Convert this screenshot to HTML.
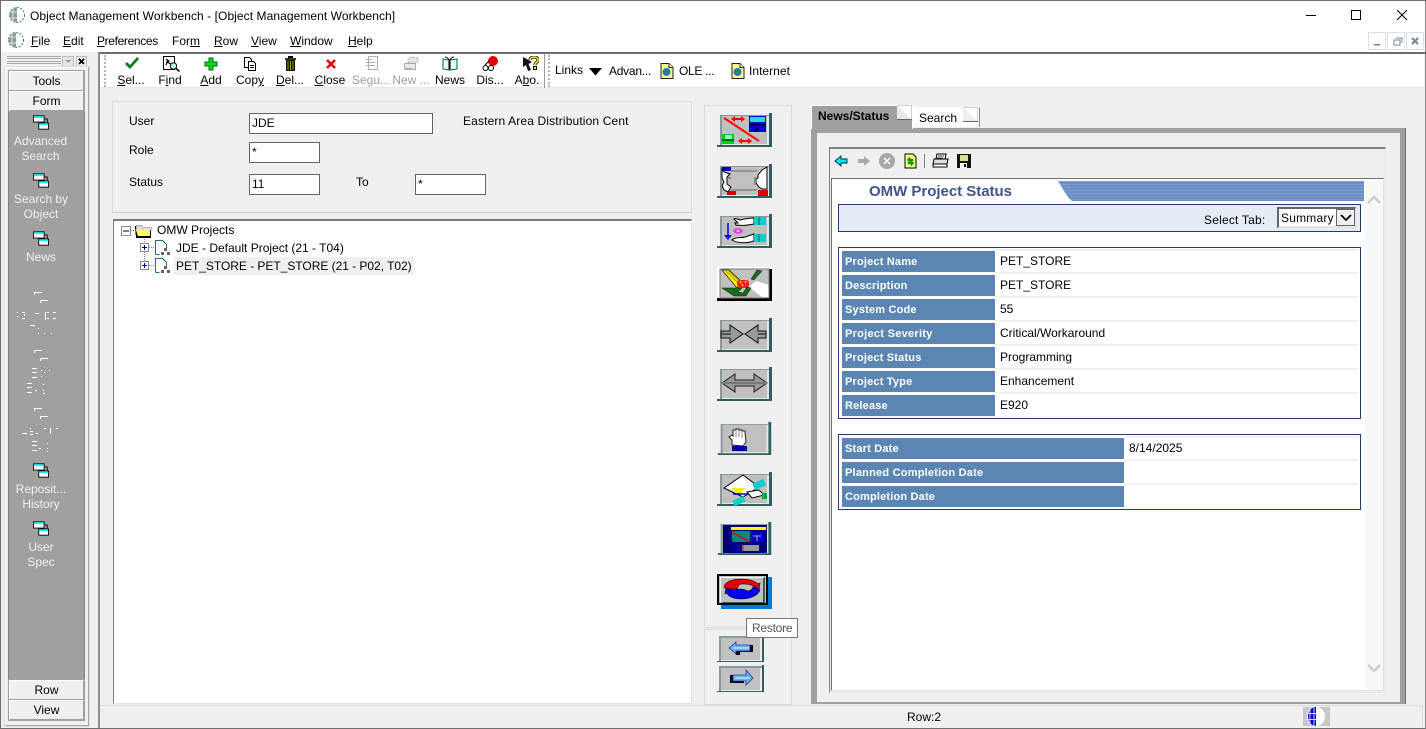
<!DOCTYPE html>
<html><head><meta charset="utf-8"><style>
html,body{margin:0;padding:0}
body{width:1426px;height:729px;position:relative;overflow:hidden;background:#f0f0f0;font:12px/14px "Liberation Sans",sans-serif;color:#000}
.a,.t,.c,svg.i{position:absolute}
.a{box-sizing:border-box}
.t{white-space:nowrap;line-height:14px}
.c{white-space:nowrap;line-height:14px;text-align:center;transform:translateX(-50%)}
.w{color:#f0f0f0}
.g{color:#a0a0a0}
.in{position:absolute;box-sizing:border-box;background:#fff;border:1px solid #646464;padding-left:2px;line-height:18px;height:21px}
.btn{position:absolute;left:9px;width:75px;height:20px;box-sizing:border-box;background:#f0f0f0;border:1px solid #a0a0a0;border-top-color:#fff;border-left-color:#fff;outline:1px solid #a0a0a0;text-align:center;line-height:19px}
.lb{position:absolute;background:#5b86b4;color:#fff;font-weight:bold;font-size:11px;line-height:22px;letter-spacing:.18px;padding-left:3px;box-sizing:border-box;height:21px}
.v{position:absolute;white-space:nowrap;line-height:14px}
.rl{position:absolute;height:2px;background:#f1f0ec}
</style></head><body>
<svg width="0" height="0" style="position:absolute"><defs>
<symbol id="f" viewBox="0 0 55 35"><path fill="#2f5f5f" d="M0 32h52V0l3-1v35H0z"/><rect x="3" y="2" width="49" height="30" fill="#c0c0c0"/><path fill="#8a9a9a" d="M3 2h49v1H5v29H3z"/><path fill="#e6e6e6" d="M50 3h2v29H5v-1h45z"/></symbol>
<symbol id="m" viewBox="0 0 18 16"><rect x=".5" y=".5" width="12" height="7" fill="#fff" stroke="#000"/><rect x="1" y="1" width="11" height="2" fill="#0ff"/><path d="M13 4h3v4" fill="none" stroke="#000"/><rect x="6.5" y="8.5" width="11" height="7" fill="#fff" stroke="#000"/><rect x="7" y="9" width="10" height="2" fill="#0ff"/></symbol>
<symbol id="gl" viewBox="0 0 18 18"><circle cx="9" cy="9" r="7.5" fill="#fff" stroke="#2f7f7f" stroke-dasharray="2 1.5"/><path d="M9 1.5A7.5 7.5 0 0 0 9 16.500z" fill="#8d9a9a"/><path d="M2 6h7M2 12h7M5 2v14" stroke="#dfe5e5"/></symbol>
<symbol id="doc" viewBox="0 0 14 16"><path d="M1 .5h8l4 4v11H1z" fill="#ff8" stroke="#222"/><path d="M9 .5v4h4" fill="#fff" stroke="#222"/><circle cx="6.500" cy="9" r="4" fill="#27c"/><path d="M4 8l3-2 1 3-3 2z" fill="#383"/></symbol>
</defs></svg>

<!-- window -->
<div class="a" style="left:0;top:0;width:1426px;height:729px;border:1px solid #6f6f6f;border-right-color:#8a8a8a"></div>
<div class="a" style="left:1px;top:1px;width:1424px;height:51px;background:#fff"></div>
<svg class="i" style="left:8px;top:6px" width="18" height="18"><use href="#gl"/></svg>
<div class="t" style="left:30px;top:9px;letter-spacing:.07px">Object Management Workbench - [Object Management Workbench]</div>
<svg class="i" style="left:7px;top:31px" width="18" height="18"><use href="#gl"/></svg>
<div class="t" style="left:31px;top:34px"><u>F</u>ile</div>
<div class="t" style="left:63px;top:34px"><u>E</u>dit</div>
<div class="t" style="left:97px;top:34px;letter-spacing:-.35px"><u>P</u>references</div>
<div class="t" style="left:172px;top:34px">For<u>m</u></div>
<div class="t" style="left:214px;top:34px"><u>R</u>ow</div>
<div class="t" style="left:251px;top:34px"><u>V</u>iew</div>
<div class="t" style="left:290px;top:34px"><u>W</u>indow</div>
<div class="t" style="left:348px;top:34px"><u>H</u>elp</div>
<!-- window controls -->
<svg class="i" style="left:1300px;top:5px" width="120" height="22" fill="none" stroke="#000" shape-rendering="crispEdges"><path d="M6 10.500h10"/><rect x="51.500" y="5.500" width="9" height="9"/><path d="M97 5l10 10M107 5l-10 10" shape-rendering="auto"/></svg>
<div class="a" style="left:1368px;top:32px;width:18px;height:18px;border:1px solid #e0e0e0"></div>
<div class="a" style="left:1387px;top:32px;width:18px;height:18px;border:1px solid #e0e0e0"></div>
<div class="a" style="left:1406px;top:32px;width:18px;height:18px;border:1px solid #e0e0e0"></div>
<svg class="i" style="left:1368px;top:32px" width="56" height="18" fill="none" stroke="#6f8899" stroke-width="1.500" shape-rendering="crispEdges"><path d="M6 12.500h6"/><path d="M26 8h6v5h-6zM28 6h6v5" stroke-width="1"/><path d="M44 6l6 6M50 6l-6 6" stroke-width="2" shape-rendering="auto"/></svg>

<!-- toolbar -->
<div class="a" style="left:98px;top:52px;width:1328px;height:2px;background:#6d6d6d"></div>
<div class="a" style="left:98px;top:54px;width:1326px;height:34px;background:#fff"></div>
<div class="a" style="left:98px;top:52px;width:2px;height:676px;background:#8c8c8c"></div>
<div class="a" style="left:100px;top:87px;width:1324px;height:1px;background:#e8e8e8"></div>
<div class="a" style="left:104px;top:55px;height:32px;width:0;border-left:2px dotted #b5b5b5"></div>
<div class="a" style="left:544px;top:54px;height:34px;width:1px;background:#9a9a9a"></div>
<div class="a" style="left:548px;top:55px;height:32px;width:0;border-left:2px dotted #b5b5b5"></div>

<svg class="i" style="left:124px;top:57px" width="15" height="13"><path d="M1 7l2-2 3 3 7-8 2 2-9 10z" fill="#0a7a1e"/></svg>
<svg class="i" style="left:163px;top:56px" width="17" height="16" fill="none" stroke="#000"><rect x=".5" y=".5" width="11" height="13" fill="#fff"/><path d="M3 3l3 2-2 1 4 2M3 9l2-5" stroke-width="1.200"/><circle cx="10.500" cy="10" r="3.200" fill="#bfe"/><path d="M13 12.500l3.500 3" stroke-width="1.500"/></svg>
<svg class="i" style="left:204px;top:57px" width="14" height="14" shape-rendering="crispEdges"><path d="M5 1h4v4h4v4H9v4H5V9H1V5h4z" fill="#0d0" stroke="#063"/></svg>
<svg class="i" style="left:243px;top:57px" width="14" height="14" fill="#fff" stroke="#000" shape-rendering="crispEdges"><path d="M1.500.5h5l2 2v8h-7z"/><path d="M5.500 4.500h5l2 2v7h-7z"/><path d="M7 8.500h4M7 10.500h4"/></svg>
<svg class="i" style="left:284px;top:56px" width="13" height="15" shape-rendering="crispEdges"><rect x="1" y="2" width="11" height="2" fill="#333"/><rect x="4" y="0" width="5" height="2" fill="#000"/><rect x="2" y="4" width="9" height="11" fill="#111"/><path d="M4 5v9M6.500 5v9M9 5v9" stroke="#a8a000"/></svg>
<svg class="i" style="left:325px;top:58px" width="12" height="12"><path d="M2 2l8 8M10 2l-8 8" stroke="#e00" stroke-width="2.500"/></svg>
<svg class="i" style="left:365px;top:56px" width="13" height="15" fill="#fff" stroke="#b0b0b0" shape-rendering="crispEdges"><path d="M3.500.5h9v13h-9z"/><path d="M.5 3.500h6M1 6.500h9M1 9.500h9"/></svg>
<svg class="i" style="left:403px;top:56px" width="17" height="15" fill="#e8e8e8" stroke="#aaa" shape-rendering="crispEdges"><path d="M1.500 7.500h11v6h-11z"/><path d="M3 12.500h6"/><path d="M5 7V3l3-2 7 1v4l-3 1z" stroke-dasharray="2 1"/></svg>
<svg class="i" style="left:442px;top:56px" width="16" height="15" fill="none"><path d="M1 3l6 1v10L1 13z" fill="#e8fff8" stroke="#063"/><path d="M15 3L8 4v10l7-1z" fill="#e8fff8" stroke="#063"/><path d="M3 1c2 0 3 1 4 3v9M12 1c-2 0-3 1-4 3v9" stroke="#000"/></svg>
<svg class="i" style="left:482px;top:55px" width="17" height="17"><circle cx="11" cy="6" r="5" fill="#e60000"/><circle cx="3.500" cy="13" r="2.500" fill="#fff" stroke="#000"/><circle cx="9" cy="13" r="2.500" fill="#fff" stroke="#000"/><path d="M6 13h1M3 10l4-4" stroke="#000"/></svg>
<svg class="i" style="left:522px;top:56px" width="17" height="16"><path d="M1 1l9 5-3.500 2 2.500 6-3 1-2-6-3 2z" fill="#111"/><path d="M8 4c0-4 8-4 8 0 0 3-3 2-3 5" fill="none" stroke="#000" stroke-width="3"/><path d="M8 4c0-4 8-4 8 0 0 3-3 2-3 5" fill="none" stroke="#ff0" stroke-width="1.500"/><rect x="11.500" y="10.500" width="3" height="3" fill="#ff0" stroke="#000"/></svg>

<div class="c" style="left:131px;top:73px"><u>S</u>el...</div>
<div class="c" style="left:170px;top:73px">F<u>i</u>nd</div>
<div class="c" style="left:211px;top:73px"><u>A</u>dd</div>
<div class="c" style="left:250px;top:73px">Cop<u>y</u></div>
<div class="c" style="left:290px;top:73px"><u>D</u>el...</div>
<div class="c" style="left:330px;top:73px"><u>C</u>lose</div>
<div class="c g" style="left:371px;top:73px">Segu...</div>
<div class="c g" style="left:411px;top:73px">New ...</div>
<div class="c" style="left:450px;top:73px">News</div>
<div class="c" style="left:490px;top:73px">Dis...</div>
<div class="c" style="left:527px;top:73px">A<u>b</u>o.</div>
<div class="t" style="left:555px;top:63px">Links</div>
<svg class="i" style="left:588px;top:67px" width="15" height="9"><path d="M1 1h13L7.500 8.500z" fill="#000"/></svg>
<div class="t" style="left:609px;top:64px;letter-spacing:-.25px">Advan...</div>
<svg class="i" style="left:660px;top:63px" width="14" height="16"><use href="#doc"/></svg>
<div class="t" style="left:679px;top:64px;letter-spacing:-.3px">OLE ...</div>
<svg class="i" style="left:731px;top:63px" width="14" height="16"><use href="#doc"/></svg>
<div class="t" style="left:749px;top:64px;letter-spacing:.03px">Internet</div>

<!-- left sidebar -->
<svg class="i" style="left:7px;top:56px" width="82" height="12" shape-rendering="crispEdges"><path d="M0 .5h54M0 2.500h54M0 5.500h54M0 7.500h54" stroke="#a8a8a8"/><rect x="55.500" y=".5" width="11" height="11" fill="#e6e6e6" stroke="#bbb"/><path d="M58 4h6l-3 3z" fill="#999"/><rect x="69.500" y=".5" width="10" height="11" fill="#eee" stroke="#bbb"/><path d="M72 3l5 5M77 3l-5 5" stroke="#000" stroke-width="2"/></svg>
<div class="a" style="left:5px;top:67px;width:84px;height:659px;border:1px solid #a6a6a6;border-top-color:#fff;border-left-color:#fff;outline:1px solid #dcdcdc"></div>
<div class="a" style="left:8px;top:70px;width:77px;height:651px;border:1px solid #808080;background:#a0a0a0"></div>
<div class="btn" style="top:71px">Tools</div>
<div class="btn" style="top:91px">Form</div>
<div class="btn" style="top:680px">Row</div>
<div class="btn" style="top:700px">View</div>

<svg class="i" style="left:33px;top:115px" width="16" height="15"><use href="#m"/></svg>
<div class="c w" style="left:40.500px;top:134px">Advanced</div>
<div class="c w" style="left:40.500px;top:149px">Search</div>
<svg class="i" style="left:33px;top:173px" width="16" height="15"><use href="#m"/></svg>
<div class="c w" style="left:41px;top:192px">Search by</div>
<div class="c w" style="left:41px;top:207px">Object</div>
<svg class="i" style="left:33px;top:231px" width="16" height="15"><use href="#m"/></svg>
<div class="c w" style="left:41px;top:250px">News</div>

<svg class="i" style="left:14px;top:290px" width="54" height="260" fill="#fff" shape-rendering="crispEdges">
<path d="M20 2h8v1h-7v2h-1zM26 10h8v1h-7v2h-1z"/>
<path d="M3 22h1v1H3zM3 26h1v1H3zM8 22h3v1H8zM10 24h1v2h-1zM8 28h3v1H8zM21 23h4v1h-4zM31 22h1v8h-1zM33 22h2v1h-2zM33 28h2v1h-2zM39 22h3v1h-3zM39 28h3v1h-3zM16 35h5v1h-5zM24 38h1v1h-1zM24 43h1v1h-1zM30 43h1v1h-1zM37 43h1v1h-1z"/>
<path d="M20 60h8v1h-7v2h-1zM26 68h8v1h-7v2h-1z"/>
<path d="M18 78h5v1h-5zM18 82h5v1h-5zM18 87h5v1h-5zM27 80h1v1h-1zM30 82h1v1h-1zM27 86h1v1h-1zM35 80h1v1h-1zM13 93h5v1h-5zM13 97h5v1h-5zM13 102h5v1h-5zM21 100h2v1h-2zM29 94h1v1h-1zM29 100h1v1h-1zM29 103h2v1h-2z"/>
<path d="M20 118h8v1h-7v2h-1zM26 126h8v1h-7v2h-1z"/>
<path d="M8 143h5v1H8zM16 138h1v1h-1zM16 141h3v1h-3zM16 144h3v1h-3zM22 143h2v1h-2zM30 138h2v1h-2zM36 138h1v6h-1zM42 138h2v1h-2zM18 151h5v1h-5zM18 155h5v1h-5zM18 160h5v1h-5zM25 158h2v1h-2zM33 153h1v1h-1zM33 158h1v1h-1zM33 161h1v1h-1z"/>
</svg>

<svg class="i" style="left:33px;top:463px" width="16" height="15"><use href="#m"/></svg>
<div class="c w" style="left:41px;top:482px">Reposit...</div>
<div class="c w" style="left:41px;top:497px">History</div>
<svg class="i" style="left:33px;top:521px" width="16" height="15"><use href="#m"/></svg>
<div class="c w" style="left:41px;top:540px">User</div>
<div class="c w" style="left:41px;top:555px">Spec</div>

<!-- form panel -->
<div class="a" style="left:112px;top:101px;width:580px;height:112px;border:1px solid #dcdcdc;border-bottom-color:#d0d0d0"></div>
<div class="t" style="left:129px;top:114px">User</div>
<div class="in" style="left:249px;top:113px;width:184px">JDE</div>
<div class="t" style="left:463px;top:114px;letter-spacing:.14px">Eastern Area Distribution Cent</div>
<div class="t" style="left:129px;top:143px">Role</div>
<div class="in" style="left:249px;top:142px;width:71px">*</div>
<div class="t" style="left:129px;top:175px">Status</div>
<div class="in" style="left:249px;top:174px;width:71px">11</div>
<div class="t" style="left:356px;top:175px">To</div>
<div class="in" style="left:415px;top:174px;width:71px">*</div>

<!-- tree -->
<div class="a" style="left:113px;top:219px;width:579px;height:485px;background:#fff;border:2px solid #7a7a7a;border-left-width:1px;border-right:1px solid #e3e3e3;border-bottom:1px solid #e3e3e3"></div>
<svg class="i" style="left:120px;top:222px" width="60" height="56" shape-rendering="crispEdges">
<path d="M11 8.500h5M24.500 15v6M24.500 30v9M29 25.500h6M29 43.500h6" stroke="#888" stroke-dasharray="1 1" fill="none"/>
<rect x="1.500" y="4.500" width="9" height="9" fill="#fff" stroke="#8a8a8a"/><path d="M3 9h6" stroke="#000"/>
<rect x="20.500" y="21.500" width="8" height="8" fill="#fff" stroke="#8a8a8a"/><path d="M22 25.500h5M24.500 23v5" stroke="#00a"/>
<rect x="20.500" y="39.500" width="8" height="8" fill="#fff" stroke="#8a8a8a"/><path d="M22 43.500h5M24.500 41v5" stroke="#00a"/>
<path d="M15 4h7l2 2h7v10H16z" fill="#000"/><path d="M16 3h6l1 2h8v3H16z" fill="#ddd" stroke="#888" stroke-width=".5"/><path d="M16 8h13l1 1v5H18z" fill="#ff6"/>
</svg>
<svg class="i" style="left:155px;top:239px" width="18" height="36" shape-rendering="crispEdges">
<path d="M.5 15.500V1.500h7l4 4v4" fill="#fff" stroke="#177"/><path d="M.5 15.500h4" stroke="#177"/><path d="M9 9h3v3H9zM6 13h3v3H6zM12 13h3v3h-3z" fill="#666"/>
<path d="M.5 33.500V19.500h7l4 4v4" fill="#fff" stroke="#177"/><path d="M.5 33.500h4" stroke="#177"/><path d="M9 27h3v3H9zM6 31h3v3H6zM12 31h3v3h-3z" fill="#666"/>
</svg>
<div class="t" style="left:157px;top:223px">OMW Projects</div>
<div class="t" style="left:176px;top:241px">JDE - Default Project (21 - T04)</div>
<div class="a" style="left:174px;top:257px;width:240px;height:18px;background:#f0f0f0"></div>
<div class="t" style="left:176px;top:259px;letter-spacing:-.03px">PET_STORE - PET_STORE (21 - P02, T02)</div>

<!-- tile panels -->
<div class="a" style="left:704px;top:105px;width:88px;height:523px;border:1px solid #dcdcdc;border-bottom:1px solid #d8d8d8"></div>
<div class="a" style="left:704px;top:629px;width:88px;height:76px;border:1px solid #dcdcdc"></div>

<svg class="i" style="left:717px;top:113px" width="55" height="35"><use href="#f"/>
<path d="M7 5l35 23" stroke="#f00" stroke-width="2"/><path d="M14 6l4-3v2h6V3l4 3-4 3V7h-6v2zM21 28l4-3v2h6v-2l4 3-4 3v-2h-6v2z" fill="#f00"/>
<rect x="32" y="3" width="17" height="16" fill="#00c"/><rect x="33" y="4" width="15" height="5" fill="#2dd"/><path d="M32 12h17M40 12v7" stroke="#000"/><rect x="5" y="21" width="12" height="10" fill="#0c2"/><rect x="8" y="22" width="7" height="4" fill="#8fc"/><path d="M5 27h12" stroke="#000"/></svg>
<svg class="i" style="left:717px;top:164px" width="55" height="35"><use href="#f"/>
<path d="M14 7h26M14 26h26" stroke="#666"/><rect x="5" y="3" width="9" height="4" fill="#00c"/><rect x="41" y="26" width="10" height="6" fill="#d00"/><rect x="10" y="27" width="9" height="4" fill="#d00"/><path d="M5 5l2 3 6 2-3 3v7l4 3-3 5-4-2-2-4 2-4-2-4z" fill="#fff" stroke="#000"/><path d="M50 3l-5 3-4 5v3l-2 1v4l3 4 3 2h5z" fill="#fff" stroke="#000"/><path d="M11 14h3M38 13v8" stroke="#888" stroke-width="2"/></svg>
<svg class="i" style="left:717px;top:214px" width="55" height="35"><use href="#f"/>
<path d="M11 9v16" stroke="#00e" stroke-width="1.500"/><path d="M7 21h8l-4 5z" fill="#00e"/><ellipse cx="21" cy="17" rx="5" ry="3" fill="#e4e"/><circle cx="21" cy="17" r="1" fill="#fff"/><path d="M17 5c2-1 4 0 6 1 4-1 10-2 14-2v6c-5 1-12 2-18 1l-1-2h3l-2-2z" fill="#fff" stroke="#000"/><path d="M15 26c3-3 9-2 13-3l9-3v7c-6 2-15 3-22-1z" fill="#fff" stroke="#000"/><rect x="37" y="3" width="12" height="8" fill="#1cc"/><rect x="37" y="20" width="12" height="8" fill="#1cc"/><path d="M42 3v8M42 20v8" stroke="#066"/></svg>
<svg class="i" style="left:717px;top:267px" width="55" height="35"><path fill="#000" d="M0 31h52V2h3v32H0z"/><path fill="#fff" d="M0 0h55v2H3v29H0z"/><rect x="3" y="2" width="49" height="29" fill="#c0c0c0"/><path d="M5 3h7l13 12-5 6z" fill="#ff0" stroke="#222" stroke-width=".8"/><path d="M8 3l12 12M11 3l12 12" stroke="#a80"/><rect x="20" y="13" width="12" height="8" rx="3" fill="#e22"/><path d="M23 15h1M28 15h1M25 18h1" stroke="#ff0" stroke-width="2"/><path d="M32 20l13 10h7V18l-13-4z" fill="#fff"/><path d="M5 21h20l-4 4 5 1 4-6 4 1-5 8H17z" fill="#1a6b1a" stroke="#111" stroke-width=".5"/><path d="M40 3L34 12l3 1 8-9z" fill="#1a6b1a" stroke="#111" stroke-width=".5"/><rect x="3" y="2" width="49" height="29" fill="none" stroke="#777"/></svg>
<svg class="i" style="left:717px;top:318px" width="55" height="35"><use href="#f"/>
<path d="M4 13h9V7l13 9-13 9v-5H4zM49 13h-8V7L28 16l13 9v-5h8z" fill="#999" stroke="#111"/><path d="M4 16h10M41 16h8" stroke="#111"/></svg>
<svg class="i" style="left:717px;top:367px" width="55" height="35"><use href="#f"/>
<path d="M5 16l13-9v6h19V7l13 9-13 9v-6H18v6z" fill="#999" stroke="#222"/><path d="M5 16h45" stroke="#777" stroke-width="2"/></svg>
<svg class="i" style="left:717px;top:422px" width="55" height="34"><use href="#f"/>
<path d="M15 23v-5l-3-3 3-2 1 1V8h3V7h3v1h3v1h3v2l1 9-3 4z" fill="#fff" stroke="#222"/><path d="M19 8v7M22 8v7M25 9v7" stroke="#888"/><rect x="15" y="24" width="15" height="5" fill="#00a"/></svg>
<svg class="i" style="left:717px;top:472px" width="55" height="35"><use href="#f"/>
<path d="M7 16L26 3l16 12-16 10z" fill="#fff" stroke="#000"/><path d="M14 16h14l-6 7z" fill="#ee0"/><path d="M16 22h26" stroke="#00a" stroke-width="1.500"/><rect x="36" y="9" width="12" height="7" fill="#1cc" transform="rotate(-25 42 12)"/><rect x="16" y="26" width="12" height="6" fill="#1cc" transform="rotate(-25 22 29)"/><path d="M30 20l12-2 5 5-12 3z" fill="#fff" stroke="#000"/><rect x="45" y="21" width="5" height="6" fill="#0a3"/></svg>
<svg class="i" style="left:717px;top:522px" width="55" height="34"><use href="#f"/>
<rect x="6" y="3" width="44" height="28" fill="#00007a"/><rect x="14" y="5" width="35" height="3" fill="#ff0"/><rect x="15" y="9" width="18" height="11" fill="#088"/><path d="M15 10l18 10" stroke="#e00" stroke-width="1.500"/><rect x="34" y="10" width="12" height="10" fill="#00c"/><path d="M36 14h8M40 14v5" stroke="#aac"/><rect x="16" y="23" width="26" height="6" fill="#999"/><rect x="16" y="23" width="9" height="6" fill="#00a"/><path d="M26 23v6" stroke="#e00"/></svg>
<div class="a" style="left:721px;top:577px;width:51px;height:32px;background:#0078d7"></div>
<svg class="i" style="left:717px;top:574px" width="51" height="31"><rect x="1" y="1" width="49" height="29" fill="#c0c0c0" stroke="#000" stroke-width="2"/><path d="M48 3v26H5v-1h41V3z" fill="#2f5f5f"/><path d="M3 3h44v1H4v24H3z" fill="#fff"/>
<path d="M7 13c1-5 8-8 17-8 8 0 14 2 17 5l2-1-1 7-6-2 2-1c-3-2-7-3-12-3-3 0-5 1-5 3 0 1-1 2-3 2-4 1-9 1-11-2z" fill="#e60000" stroke="#000" stroke-width=".6"/><path d="M43 16c-2 6-11 9-19 9-8 0-13-3-14-6l-2 1 1-6c5 1 9 2 14 1 4 0 5 1 8 2 3 0 4-2 5-4l1-1 6 4z" fill="#0000f0" stroke="#000" stroke-width=".6"/></svg>
<div class="a" style="left:746px;top:618px;width:52px;height:20px;background:#fff;border:1px solid #767676;color:#575757;line-height:18px;padding-left:5px;letter-spacing:-.25px;z-index:5">Restore</div>

<svg class="i" style="left:717px;top:636px" width="48" height="27"><path fill="#2f5f5f" d="M0 25h45V0l2-1v27H0z"/><rect x="2" y="0" width="43" height="25" fill="#c0c0c0"/><path d="M2 0h43v2H4v23H2z" fill="#8a9a9a"/><path d="M43 2h2v23H4v-1h39z" fill="#eee"/><path d="M19 9h17v7H23v3h-4z" fill="#000"/><path d="M12 12l7-6v3h14v6H19v3z" fill="#6ab0e8" stroke="#33a" stroke-width=".8"/><path d="M16 12h16" stroke="#cff"/></svg>
<svg class="i" style="left:717px;top:665px" width="48" height="28"><path fill="#2f5f5f" d="M0 26h45V0l2-1v28H0z"/><rect x="2" y="1" width="43" height="25" fill="#c0c0c0"/><path d="M2 1h43v2H4v23H2z" fill="#8a9a9a"/><path d="M43 3h2v23H4v-1h39z" fill="#eee"/><path d="M13 10h14v8H13z" fill="#000"/><path d="M16 10h13V5l7 8-7 7v-4H16z" fill="#6ab0e8" stroke="#33a" stroke-width=".8"/><path d="M18 13h15" stroke="#cff"/></svg>

<!-- tabs & right panel -->
<div class="a" style="left:811px;top:128px;width:595px;height:576px;background:#a0a0a0;border-right:1px solid #6d6d6d"></div>
<div class="a" style="left:817px;top:133px;width:583px;height:569px;background:#f0f0f0"></div>
<div class="a" style="left:811px;top:105px;width:102px;height:24px;background:#a0a0a0;border:1px solid #fff;border-bottom:0"></div>
<div class="t" style="left:818px;top:109px;font-weight:bold;font-size:12px">News/Status</div>
<svg class="i" style="left:897px;top:105px" width="16" height="16"><rect x=".5" y=".5" width="14" height="14" fill="#fff" stroke="#d0d0d0"/><path d="M0 0l15 15H0z" fill="#e8e8e8"/><path d="M0 14.500h15" stroke="#666"/></svg>
<div class="a" style="left:913px;top:107px;width:67px;height:20px;background:#fff;border-top:1px solid #fff;border-right:1px solid #888;"></div>
<div class="t" style="left:919px;top:111px">Search</div>
<svg class="i" style="left:963px;top:107px" width="16" height="16"><rect x=".5" y=".5" width="14" height="14" fill="#fff" stroke="#d0d0d0"/><path d="M0 0l15 15H0z" fill="#eee"/><path d="M0 14.500h15" stroke="#666"/></svg>

<div class="a" style="left:829px;top:147px;width:557px;height:546px;background:#f0f0f0;border:1px solid #808080;border-right:1px solid #e8e8e8;border-bottom:1px solid #e8e8e8;border-top-width:2px"></div>
<div class="a" style="left:831px;top:178px;width:553px;height:513px;background:#fff;border-top:1px solid #6f6f6f;border-left:1px solid #6f6f6f;border-bottom:1px solid #e3e3e3;border-right:1px solid #e3e3e3"></div>
<div class="a" style="left:1365px;top:180px;width:18px;height:510px;background:#f7f8f8"></div>
<svg class="i" style="left:1367px;top:194px" width="14" height="12"><path d="M1 9l6-6 6 6" fill="none" stroke="#cdcdcd" stroke-width="2.500"/></svg>
<svg class="i" style="left:1367px;top:662px" width="14" height="12"><path d="M1 3l6 6 6-6" fill="none" stroke="#cdcdcd" stroke-width="2.500"/></svg>
<!-- browser toolbar -->
<svg class="i" style="left:834px;top:153px" width="140" height="16">
<path d="M1 8l6-5v3h6v4H7v3z" fill="#0ee" stroke="#024" stroke-width=".9"/>
<path d="M36 8l-6-5v3h-6v4h6v3z" fill="#aaa"/>
<circle cx="53" cy="8" r="8" fill="#a8a8a8"/><path d="M50 5l6 6M56 5l-6 6" stroke="#fff" stroke-width="1.500"/>
<path d="M71 1h8l3 3v11H71z" fill="#ff7" stroke="#000"/><path d="M73 7l3-3v2h3v2h-3v1zM80 10l-3 3v-2h-3V9h3V8z" fill="#0a0" stroke="#063" stroke-width=".4"/>
<path d="M90.500 1v14" stroke="#808080"/>
<g transform="translate(6 0)"><path d="M97 1h9l-1 5H96z" fill="#fff" stroke="#000"/><path d="M94 6h14l-1 5H93z" fill="#ddd" stroke="#000"/><path d="M93 11h14v3H93z" fill="#fff" stroke="#000"/><path d="M98 3h6M97 5h6" stroke="#000" stroke-width=".7"/></g>
<g transform="translate(4 0)"><rect x="119" y="1" width="14" height="14" fill="#111"/><rect x="122" y="2" width="8" height="6" fill="#dbe08a"/><rect x="122" y="10" width="7" height="5" fill="#fff"/><rect x="126" y="11" width="2" height="3" fill="#000"/></g>
</svg>

<!-- browser content -->
<div class="t" style="left:869px;top:185px;font-weight:bold;font-size:15px;letter-spacing:-.02px;color:#3f5488">OMW Project Status</div>
<svg class="i" style="left:1058px;top:181px" width="306" height="20"><defs><pattern id="st" width="4" height="3" patternUnits="userSpaceOnUse"><rect width="4" height="3" fill="#6b8fc4"/><rect width="4" height="1" fill="#7d9dcf"/></pattern></defs><path d="M0 0h306v20H14C8 15 4 6 0 0z" fill="url(#st)"/></svg>
<div class="a" style="left:838px;top:204px;width:523px;height:28px;background:#e6ecf5;border:1px solid #243a73"></div>
<div class="t" style="left:1204px;top:213px;letter-spacing:.2px">Select Tab:</div>
<div class="a" style="left:1277px;top:207px;width:79px;height:21px;background:#e8e8e8;border:1px solid #e0e0e0;border-top:2px solid #666;border-left:2px solid #666"></div>
<div class="a" style="left:1279px;top:209px;width:58px;height:17px;background:#fff"></div>
<div class="t" style="left:1281px;top:211px;letter-spacing:.2px">Summary</div>
<div class="a" style="left:1336px;top:209px;width:19px;height:17px;background:#f0f0f0;border:1px solid #666"></div>
<svg class="i" style="left:1340px;top:213px" width="12" height="9"><path d="M1 2l5 5 5-5" fill="none" stroke="#000" stroke-width="1.800"/></svg>

<!-- table 1 -->
<div class="a" style="left:838px;top:247px;width:523px;height:172px;background:#fff;border:1px solid #243a73"></div>
<div class="lb" style="left:842px;top:251px;width:153px">Project Name</div><div class="v" style="left:1000px;top:254px">PET_STORE</div>
<div class="lb" style="left:842px;top:275px;width:153px">Description</div><div class="v" style="left:1000px;top:278px">PET_STORE</div>
<div class="lb" style="left:842px;top:299px;width:153px">System Code</div><div class="v" style="left:1000px;top:302px">55</div>
<div class="lb" style="left:842px;top:323px;width:153px;letter-spacing:.28px">Project Severity</div><div class="v" style="left:1000px;top:326px">Critical/Workaround</div>
<div class="lb" style="left:842px;top:347px;width:153px">Project Status</div><div class="v" style="left:1000px;top:350px">Programming</div>
<div class="lb" style="left:842px;top:371px;width:153px">Project Type</div><div class="v" style="left:1000px;top:374px">Enhancement</div>
<div class="lb" style="left:842px;top:395px;width:153px">Release</div><div class="v" style="left:1000px;top:398px">E920</div>
<div class="rl" style="left:996px;top:249px;width:362px"></div>
<div class="rl" style="left:996px;top:272px;width:362px"></div>
<div class="rl" style="left:996px;top:296px;width:362px"></div>
<div class="rl" style="left:996px;top:320px;width:362px"></div>
<div class="rl" style="left:996px;top:344px;width:362px"></div>
<div class="rl" style="left:996px;top:368px;width:362px"></div>
<div class="rl" style="left:996px;top:392px;width:362px"></div>

<!-- table 2 -->
<div class="a" style="left:838px;top:434px;width:523px;height:76px;background:#fff;border:1px solid #243a73"></div>
<div class="lb" style="left:842px;top:438px;width:282px">Start Date</div><div class="v" style="left:1129px;top:441px">8/14/2025</div>
<div class="lb" style="left:842px;top:462px;width:282px;letter-spacing:.22px">Planned Completion Date</div>
<div class="lb" style="left:842px;top:486px;width:282px">Completion Date</div>
<div class="rl" style="left:1125px;top:436px;width:233px"></div>
<div class="rl" style="left:1125px;top:459px;width:233px"></div>
<div class="rl" style="left:1125px;top:483px;width:233px"></div>

<!-- status bar -->
<div class="a" style="left:100px;top:705px;width:1323px;height:1px;background:#dcdcdc"></div>
<div class="a" style="left:1422px;top:705px;width:1px;height:22px;background:#dcdcdc"></div>
<div class="t" style="left:907px;top:710px">Row:2</div>
<div class="a" style="left:1303px;top:707px;width:27px;height:19px;background:#c8c8c8"></div>
<svg class="i" style="left:1305px;top:707px" width="24" height="19"><ellipse cx="11" cy="9.500" rx="9" ry="9.500" fill="#fff"/><path d="M11 0A8 9.500 0 0 0 3 9.500 8 9.500 0 0 0 11 19z" fill="#0000c8"/><path d="M1 6.500h10M1 12.500h10M5 1v17M9 0v19" stroke="#d8d8ff"/></svg>
</body></html>
